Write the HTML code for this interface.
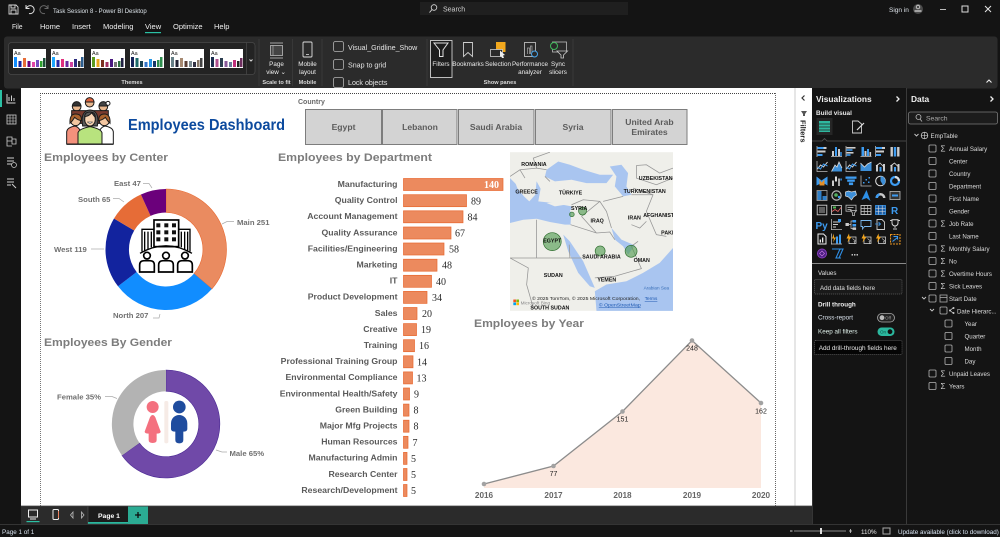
<!DOCTYPE html>
<html><head><meta charset="utf-8"><title>Power BI Desktop</title>
<style>
html,body{margin:0;padding:0;background:#141414;width:1000px;height:537px;overflow:hidden}
svg{display:block}
text{font-family:"Liberation Sans",sans-serif}
.m{fill:#f0f0f0;font-size:7.5px}
.r{fill:#ececec;font-size:6.3px;text-anchor:middle}
.g{fill:#d8d8d8;font-size:5.6px;font-weight:bold;text-anchor:middle}
.d{fill:#dcdcdc;font-size:6.15px}
.k{fill:#e4e4e4;font-size:7.1px}
.cb{fill:none;stroke:#b5b5b5;stroke-width:.8}
.t{fill:#7c7c7c;font-size:11px;font-weight:bold}
.l{fill:#5a5a5a;font-size:8.7px;font-weight:bold;text-anchor:end}
.n{fill:#2a2a2a;font-size:10px;font-family:"Liberation Serif",serif;-webkit-text-stroke:.2px #2a2a2a}
.c{fill:#707070;font-size:7.7px;font-weight:bold}
.s{fill:#5c5c5c;font-size:8.6px;font-weight:bold;text-anchor:middle}
.mt{fill:#111;font-size:16px;font-weight:bold;text-anchor:middle}
.y{fill:#666;font-size:8.2px;font-weight:bold;text-anchor:middle}
.v{fill:#222;font-size:7px;text-anchor:middle}
.bar{fill:#ec8a5e;stroke:#e8672e;stroke-width:.7}
</style></head><body>
<svg width="1000" height="537" viewBox="0 0 1000 537" xmlns="http://www.w3.org/2000/svg">
<defs>
<g id="hb"><path d="M.5 0V11" stroke="#bbb" stroke-width=".8"/><rect x="1" y="1" width="6" height="2" fill="#3d9bf0"/><rect x="7" y="1" width="3" height="2" fill="#ccc"/><rect x="1" y="4.5" width="8" height="2" fill="#ccc"/><rect x="1" y="8" width="5" height="2" fill="#3d9bf0"/></g>
<g id="vb"><path d="M0 10.5H11" stroke="#bbb" stroke-width=".8"/><rect x="1" y="5" width="2" height="5" fill="#ccc"/><rect x="4" y="1" width="2" height="9" fill="#3d9bf0"/><rect x="7" y="3" width="2" height="7" fill="#ccc"/><rect x="9.3" y="6" width="1.4" height="4" fill="#3d9bf0"/></g>
<g id="hc"><path d="M.5 0V11" stroke="#bbb" stroke-width=".8"/><rect x="1" y="1" width="9" height="1.6" fill="#ccc"/><rect x="1" y="3.2" width="6" height="1.6" fill="#3d9bf0"/><rect x="1" y="6" width="7" height="1.6" fill="#ccc"/><rect x="1" y="8.2" width="4" height="1.6" fill="#3d9bf0"/></g>
<g id="vc"><path d="M0 10.5H11" stroke="#bbb" stroke-width=".8"/><rect x="1" y="1" width="2.5" height="9" fill="#3d9bf0"/><rect x="4" y="5" width="2" height="5" fill="#ccc"/><rect x="6.5" y="3" width="2" height="7" fill="#3d9bf0"/><rect x="9" y="6" width="1.6" height="4" fill="#ccc"/></g>
<g id="pc"><rect x="1" y="1" width="2.4" height="9.5" fill="#ccc"/><rect x="4.3" y="1" width="2.4" height="9.5" fill="#3d9bf0"/><rect x="7.6" y="1" width="2.4" height="9.5" fill="#ccc"/></g>
<g id="ln"><path d="M.5 0V10.5H11" stroke="#bbb" fill="none" stroke-width=".8"/><path d="M1 8L4 4L7 6L11 1" stroke="#ddd" fill="none"/><path d="M1 6L4 8L7 3L11 5" stroke="#3d9bf0" fill="none"/></g>
<g id="ar"><path d="M.5 10.5L4 4L6 6L8 1L11 7V10.5Z" fill="#3d8fd8"/><path d="M.5 10.5L4 4L6 6L8 1L11 7" fill="none" stroke="#ddd" stroke-width=".8"/></g>
<g id="ar2"><path d="M0 2L4 6L7 3L11 1V10H0Z" fill="#3d8fd8"/><path d="M0 2L4 6L7 3L11 1" fill="none" stroke="#ddd" stroke-width=".8"/></g>
<g id="cl"><rect x="1" y="4" width="2" height="6.5" fill="#ccc"/><rect x="4.5" y="6" width="2" height="4.5" fill="#3d9bf0"/><rect x="8" y="3" width="2" height="7.5" fill="#ccc"/><path d="M1 5L5 2L9 6" fill="none" stroke="#e0e0e0" stroke-width=".8"/></g>
<g id="rb"><path d="M0 1L5 5L11 1V10L6 7L0 10Z" fill="#3d9bf0"/><path d="M3 4L5 7L8 4V10H3Z" fill="#e2902c"/></g>
<g id="wf"><rect x="1" y="5" width="2" height="5.5" fill="#ccc"/><rect x="4" y="1" width="2" height="5" fill="#ddd"/><rect x="7" y="3" width="2" height="7.5" fill="#aaa"/><rect x="9.4" y="3" width="1.4" height="2" fill="#3d9bf0"/></g>
<g id="fn"><rect x="0" y="1" width="11" height="2.3" fill="#3d9bf0"/><rect x="1.7" y="4" width="7.6" height="2.3" fill="#3d9bf0"/><rect x="3.4" y="7" width="4.2" height="2.6" fill="#3d9bf0"/></g>
<g id="sc"><path d="M.5 0V10.5H11" stroke="#bbb" fill="none" stroke-width=".8"/><g fill="#3d9bf0"><rect x="2.5" y="6.5" width="1.5" height="1.5"/><rect x="5" y="3.5" width="1.5" height="1.5"/><rect x="7.5" y="6" width="1.5" height="1.5"/><rect x="8" y="1.5" width="1.5" height="1.5"/></g></g>
<g id="pi"><circle cx="5.5" cy="5.5" r="4.8" fill="none" stroke="#ddd"/><path d="M5.5 5.5V.7A4.8 4.8 0 0 1 8 9.6Z" fill="#3d8fd8"/></g>
<g id="do"><circle cx="5.5" cy="5.5" r="4" fill="none" stroke="#3d9bf0" stroke-width="2.2"/><path d="M5.5 1.5A4 4 0 0 1 9.5 5.5" stroke="#ddd" stroke-width="2.2" fill="none"/></g>
<g id="tr"><rect x=".5" y=".5" width="10" height="10" fill="none" stroke="#aaa" stroke-width=".8"/><rect x="1" y="1" width="4" height="9" fill="#2f7fc8"/><rect x="6" y="6" width="4" height="4" fill="#2f7fc8"/></g>
<g id="gl"><circle cx="5.5" cy="5.5" r="4.6" fill="none" stroke="#bbb" stroke-width="1.2"/><circle cx="5" cy="5" r="1.8" fill="#55b060"/><circle cx="8" cy="7" r="1.2" fill="#3d9bf0"/></g>
<g id="mp"><path d="M0 2L3 1L6 2L10 1L11 5L8 7L6 10L3 7L0 6Z" fill="#3d8fd8" stroke="#ddd" stroke-width=".7"/></g>
<g id="az"><path d="M6 0L10 11L6 8L1 10Z" fill="#2c8fe6"/></g>
<g id="ga"><path d="M.5 8A5 5 0 0 1 10.5 8H8A2.5 2.5 0 0 0 3 8Z" fill="#c8c8c8"/><path d="M.5 8A5 5 0 0 1 4 3.3L5 5.6A2.5 2.5 0 0 0 3 8Z" fill="#3d9bf0"/></g>
<g id="cd"><rect x=".5" y="1.5" width="10" height="8" fill="#333" stroke="#bbb" stroke-width=".8"/><rect x="2.5" y="4.5" width="6" height="2" fill="#3d9bf0"/></g>
<g id="ml"><rect x=".7" y=".7" width="9.6" height="9.6" fill="none" stroke="#ccc" stroke-width=".9"/><path d="M2.5 3.5H8.5M2.5 5.5H8.5M2.5 7.5H8.5" stroke="#ddd" stroke-width=".8"/></g>
<g id="kp"><rect x=".5" y="1" width="10" height="9" fill="none" stroke="#ccc" stroke-width=".8"/><path d="M1 7L4 5L7 7L10 3" stroke="#e66" fill="none" stroke-width=".8"/><rect x="2" y="2" width="3" height="2" fill="#5b5"/></g>
<g id="sl"><rect x=".5" y=".7" width="10" height="6" fill="none" stroke="#bbb" stroke-width=".8"/><path d="M2 3H8M2 5H6" stroke="#ccc" stroke-width=".7"/><path d="M5 6H11L9 8.5V11H7V8.5Z" fill="#222" stroke="#ccc" stroke-width=".7"/></g>
<g id="tb"><rect x=".5" y="1" width="10" height="9" fill="none" stroke="#ccc" stroke-width=".9"/><path d="M.5 4H10.5M.5 7H10.5M3.7 1V10M7.2 1V10" stroke="#ccc" stroke-width=".7"/></g>
<g id="mx"><rect x=".5" y="1" width="10" height="9" fill="#1c5fa8" stroke="#3d9bf0" stroke-width=".8"/><path d="M.5 4H10.5M.5 7H10.5M3.7 1V10M7.2 1V10" stroke="#ddd" stroke-width=".6"/></g>
<g id="ki"><path d="M0 10.5H11M.5 0V11" stroke="#bbb" stroke-width=".8"/><path d="M2 3H9M2 5.5H7M2 8H5" stroke="#ccc" stroke-width="1.1"/><rect x="7" y="0" width="3" height="3" fill="#3d9bf0"/></g>
<g id="dt"><rect x="0" y="4" width="3.4" height="3" fill="#ccc"/><rect x="7" y="1" width="3.6" height="2.5" fill="#3d9bf0"/><rect x="7" y="5" width="3.6" height="2.5" fill="#3d9bf0"/><rect x="7" y="8.4" width="3.6" height="2.5" fill="#ccc"/><path d="M3.4 5.5H5.5V2H7M5.5 5.5V9.5H7" stroke="#ccc" fill="none" stroke-width=".7"/></g>
<g id="cm"><path d="M.5 1.5H10.5V7.5H4L2 10V7.5H.5Z" fill="none" stroke="#7ab8ee" stroke-width=".9"/></g>
<g id="pg"><path d="M2 .5H7L9.5 3V10.5H2Z" fill="none" stroke="#ccc" stroke-width=".9"/><path d="M0 5H5.5M3.5 3L5.5 5L3.5 7" fill="none" stroke="#3d9bf0" stroke-width=".8"/></g>
<g id="ty"><path d="M2.5 .7H8.5V4A3 3 0 0 1 2.5 4Z" fill="none" stroke="#ddd" stroke-width="1"/><path d="M.5 1.5H2.5V4M10.5 1.5H8.5V4M5.5 7V9M3.5 10H7.5" fill="none" stroke="#ccc" stroke-width=".9"/></g>
<g id="pr"><path d="M1.5 .5H7L9.5 3V10.5H1.5Z" fill="none" stroke="#eee" stroke-width="1"/><rect x="3.2" y="6" width="1.3" height="3" fill="#eee"/><rect x="5.5" y="4" width="1.3" height="5" fill="#eee"/></g>
<g id="o1"><path d="M0 10.5H11M.5 0V11" stroke="#ccc" stroke-width=".7"/><rect x="5" y="3" width="2" height="7" fill="#3d9bf0"/><rect x="8" y="1" width="2" height="9" fill="#3d9bf0"/><path d="M3 0L1 5H3L2 9L5 4H3Z" fill="#f2a51e"/></g>
<g id="o2"><rect x="3.5" y="3.5" width="7" height="6.5" fill="none" stroke="#ccc" stroke-width=".8"/><path d="M7 5L10 7.5L8.5 8L9.5 10.5" fill="none" stroke="#ccc" stroke-width=".6"/><path d="M3.5 0L1 5H3L2 9L6 3.5H4Z" fill="#f2a51e"/></g>
<g id="o3"><rect x="1" y="1" width="9.5" height="9.5" fill="#1d1d1d" stroke="#e8931f" stroke-width="1" stroke-dasharray="2 1"/><path d="M4 3H8V6M3 8L8 4" stroke="#3d9bf0" fill="none"/></g>
<g id="ck"><rect width="7" height="7" rx="1" class="cb"/></g>
</defs>

<rect width="1000" height="537" fill="#141414"/>

<!-- top bar -->
<path d="M9 5H16L18 7V14H9Z M11 5V8H15V5 M11 14V10H16V14" fill="none" stroke="#d8d8d8" stroke-width=".9"/>
<path d="M26 5V8.5H29.5M26.5 8A4 4 0 1 1 29 13.5" fill="none" stroke="#e0e0e0" stroke-width="1"/>
<path d="M48 5V8.5H44.5M47.5 8A4 4 0 1 0 45 13.5" fill="none" stroke="#666" stroke-width="1"/>
<text x="53" y="13" fill="#dde4ea" font-size="6">Task Session 8 - Power BI Desktop</text>
<rect x="420" y="2" width="208" height="13" fill="#1f1f1f"/>
<circle cx="434" cy="7.5" r="2.8" fill="none" stroke="#ddd" stroke-width=".8"/><path d="M432 9.5L429.500 12.500" stroke="#ddd" stroke-width=".9"/>
<text x="443" y="11.500" fill="#cfcfcf" font-size="7">Search</text>
<text x="889" y="12" fill="#dde3ea" font-size="6.500">Sign in</text>
<circle cx="918" cy="9" r="5" fill="#4a4a4a"/><circle cx="918" cy="7" r="1.800" fill="none" stroke="#ddd" stroke-width=".8"/><path d="M914.500 11H921.500" stroke="#ddd" stroke-width="1.200"/>
<path d="M940 9.500H946" stroke="#bbb" stroke-width="1"/>
<rect x="962" y="6" width="6" height="6" fill="none" stroke="#ddd" stroke-width="1"/>
<path d="M985 6L991 12M991 6L985 12" stroke="#e5e5e5" stroke-width="1"/>

<text x="12" y="29" class="m" textLength="10.500" lengthAdjust="spacingAndGlyphs">File</text>
<text x="40" y="29" class="m">Home</text>
<text x="72" y="29" class="m">Insert</text>
<text x="103" y="29" class="m">Modeling</text>
<text x="145" y="29" class="m">View</text>
<rect x="145" y="32" width="16" height="1.200" fill="#2bc0a4"/>
<text x="173" y="29" class="m">Optimize</text>
<text x="214" y="29" class="m">Help</text>

<!-- ribbon -->
<rect x="4" y="36.500" width="993.500" height="52" rx="3" fill="#2b2b2b"/>
<rect x="8.500" y="42.500" width="246.500" height="32" rx="3" fill="#232323" stroke="#4a4a4a" stroke-width=".7"/>
<g id="themes">
<g transform="translate(13,49)"><rect width="33" height="19" fill="#fff"/><text x="1" y="6" font-size="5.400" fill="#222">Aa</text><rect x="1" y="8" width="3" height="10" fill="#118dff"/><rect x="5.500" y="12" width="3" height="6" fill="#12239e"/><rect x="10" y="9" width="3" height="9" fill="#e66c37"/><rect x="14.500" y="12" width="3" height="6" fill="#6b007b"/><rect x="19" y="13" width="3" height="5" fill="#e044a7"/><rect x="23" y="11" width="3" height="7" fill="#744ec2"/><rect x="27" y="12" width="2.500" height="6" fill="#2da12d"/><rect x="30" y="9" width="2.500" height="9" fill="#1c4e3a"/></g>
<g transform="translate(51,49)"><rect width="33" height="19" fill="#fff"/><text x="1" y="6" font-size="5.400" fill="#222">Aa</text><rect x="1" y="8" width="3" height="10" fill="#1ea7ff"/><rect x="5.500" y="11" width="3" height="7" fill="#2a2aa5"/><rect x="10" y="10" width="3" height="8" fill="#e0307f"/><rect x="14.500" y="12" width="3" height="6" fill="#6b2aa0"/><rect x="19" y="13" width="3" height="5" fill="#d044a0"/><rect x="23" y="10" width="3" height="8" fill="#2d2d80"/><rect x="27" y="12" width="2.500" height="6" fill="#333"/><rect x="30" y="8" width="2.500" height="10" fill="#2d5f90"/></g>
<g transform="translate(91,49)"><rect width="34" height="19" fill="#fff"/><text x="1" y="6" font-size="5.400" fill="#222">Aa</text><rect x="1" y="8" width="3" height="10" fill="#5a9a1f"/><rect x="5.500" y="10" width="3" height="8" fill="#e8a61c"/><rect x="10" y="11" width="3" height="7" fill="#7a3020"/><rect x="14.500" y="13" width="3" height="5" fill="#a03060"/><rect x="19" y="10" width="3" height="8" fill="#4a1a80"/><rect x="23" y="13" width="3" height="5" fill="#777"/><rect x="27" y="12" width="2.500" height="6" fill="#2d7040"/><rect x="30" y="9" width="2.500" height="9" fill="#224"/></g>
<g transform="translate(130,49)"><rect width="34" height="19" fill="#fff"/><text x="1" y="6" font-size="5.400" fill="#222">Aa</text><rect x="1" y="8" width="3" height="10" fill="#15235a"/><rect x="5.500" y="9" width="3" height="9" fill="#1d6a6a"/><rect x="10" y="12" width="3" height="6" fill="#154050"/><rect x="14.500" y="13" width="3" height="5" fill="#3377cc"/><rect x="19" y="10" width="3" height="8" fill="#2596e6"/><rect x="23" y="12" width="3" height="6" fill="#163868"/><rect x="27" y="11" width="2.500" height="7" fill="#2f8f4f"/><rect x="30" y="8" width="2.500" height="10" fill="#2f8f4f"/></g>
<g transform="translate(170,49)"><rect width="34" height="19" fill="#fff"/><text x="1" y="6" font-size="5.400" fill="#222">Aa</text><rect x="1" y="8" width="3" height="10" fill="#667f86"/><rect x="5.500" y="11" width="3" height="7" fill="#223"/><rect x="10" y="9" width="3" height="9" fill="#a78a72"/><rect x="14.500" y="12" width="3" height="6" fill="#5d4037"/><rect x="19" y="12" width="3" height="6" fill="#7a8a90"/><rect x="23" y="13" width="3" height="5" fill="#334"/><rect x="27" y="11" width="2.500" height="7" fill="#8a7a6a"/><rect x="30" y="9" width="2.500" height="9" fill="#444"/></g>
<g transform="translate(210,49)"><rect width="33" height="19" fill="#fff"/><text x="1" y="6" font-size="5.400" fill="#222">Aa</text><rect x="1" y="8" width="3" height="10" fill="#1a2c4e"/><rect x="5.500" y="10" width="3" height="8" fill="#b0508f"/><rect x="10" y="9" width="3" height="9" fill="#2c3e50"/><rect x="14.500" y="12" width="3" height="6" fill="#8a5a9a"/><rect x="19" y="13" width="3" height="5" fill="#6a7a9a"/><rect x="23" y="11" width="3" height="7" fill="#c0307a"/><rect x="27" y="12" width="2.500" height="6" fill="#222"/><rect x="30" y="9" width="2.500" height="9" fill="#703060"/></g>
</g>
<path d="M246.500 42.500V74.500" stroke="#4a4a4a" stroke-width=".7"/>
<path d="M249.500 59.500L251 61L252.500 59.500" stroke="#ddd" fill="none"/>
<text x="132" y="84" class="g">Themes</text>
<path d="M259 39V86M292.500 39V86M322 39V86M427 39V86M573 39V86" stroke="#3d3d3d" stroke-width=".8"/>
<path d="M270 43H283M270 58H283" stroke="#ccc" stroke-width=".8"/><rect x="270.500" y="45.500" width="12" height="10" fill="#444" stroke="#bbb" stroke-width=".8"/><path d="M273 45.500V55.500" stroke="#bbb" stroke-width=".6"/>
<text x="276.500" y="66" class="r">Page</text><text x="276" y="74" class="r">view ⌄</text><text x="276.500" y="84" class="g">Scale to fit</text>
<rect x="303" y="42" width="9" height="15" rx="1" fill="none" stroke="#ddd" stroke-width=".9"/><path d="M306 54.500H309" stroke="#ddd" stroke-width=".8"/>
<text x="307.500" y="66" class="r">Mobile</text><text x="307.500" y="74" class="r">layout</text><text x="307.500" y="84" class="g">Mobile</text>
<rect x="333.500" y="41.500" width="10" height="10" rx="2" class="cb"/><text x="348" y="50" class="k">Visual_Gridline_Show</text>
<rect x="333.500" y="59.500" width="10" height="10" rx="2" class="cb"/><text x="348" y="67.500" class="k">Snap to grid</text>
<rect x="333.500" y="77.500" width="10" height="10" rx="2" class="cb"/><text x="348" y="85" class="k">Lock objects</text>
<rect x="430.500" y="40.500" width="21.500" height="37" fill="#1d1d1d" stroke="#cfcfcf" stroke-width=".9"/>
<path d="M434 43H448L443 50V56.500H439.500V50Z" fill="none" stroke="#e0e0e0"/>
<text x="441" y="66" class="r">Filters</text>
<path d="M463.500 42.500H472.500V56.500L468 52.500L463.500 56.500Z" fill="none" stroke="#cfcfcf" stroke-width=".9"/>
<text x="468" y="66" class="r">Bookmarks</text>
<rect x="496" y="42" width="9.500" height="10" fill="#f2a81d"/><rect x="490.500" y="49.500" width="12" height="7" fill="#2a2a2a" stroke="#ccc" stroke-width=".8"/><path d="M500 50.500L505 55L503 55.500L504 58L502 58L501 56L500 57Z" fill="#eee"/>
<text x="498" y="66" class="r">Selection</text>
<rect x="524.500" y="42.500" width="11" height="14" fill="none" stroke="#ccc" stroke-width=".8"/><path d="M527.500 54V48H529.500V54M530.500 54V46H532V52" fill="none" stroke="#aaa" stroke-width=".7"/><circle cx="534.500" cy="54" r="3" fill="#2a2a2a" stroke="#4aa8ee"/>
<text x="530" y="66" class="r">Performance</text><text x="530" y="74" class="r">analyzer</text>
<rect x="552.500" y="42" width="14" height="10" fill="none" stroke="#bbb" stroke-width=".8"/><circle cx="554" cy="46" r="3.500" fill="#2a2a2a" stroke="#3fb85a"/><path d="M557 51H567.500L563.500 55V58H561V55Z" fill="#2a2a2a" stroke="#ccc" stroke-width=".8"/>
<text x="558" y="66" class="r">Sync</text><text x="558" y="74" class="r">slicers</text>
<text x="500" y="84" class="g">Show panes</text>
<path d="M986.500 82.500L989 80L991.500 82.500" stroke="#eee" fill="none" stroke-width="1.100"/>

<!-- left rail -->
<rect x="0" y="90" width="2" height="17" fill="#2bc0a4"/>
<path d="M7 94V103H15.500M9 101V97M11.500 101V95.500M14 101V98" stroke="#cfcfcf" fill="none"/>
<rect x="7" y="115" width="9" height="9" fill="none" stroke="#cfcfcf" stroke-width=".8"/><path d="M7 118H16M7 121H16M10 115V124M13 115V124" stroke="#cfcfcf" stroke-width=".6"/>
<path d="M7 137H12V141H7ZM12 139H16V144H12ZM7 141V146H12" fill="none" stroke="#cfcfcf" stroke-width=".8"/>
<path d="M7 158H14M7 161H14M7 164H14" stroke="#cfcfcf" stroke-width=".9"/><circle cx="14" cy="165" r="2.500" fill="#141414" stroke="#cfcfcf" stroke-width=".7"/>
<path d="M7 179H14M7 182H14M7 185H11" stroke="#cfcfcf" stroke-width=".9"/><path d="M12 184L16 188" stroke="#cfcfcf"/>

<!-- canvas -->
<rect x="21" y="88" width="791" height="418" fill="#fff"/>
<path d="M40.500 93V506" stroke="#555" stroke-width=".8" stroke-dasharray="1 1"/>
<path d="M40 93.500H776" stroke="#444" stroke-width=".9" stroke-dasharray="1 1"/>
<path d="M775.500 93V506" stroke="#666" stroke-width="1" stroke-dasharray="1 1"/>
<path d="M795 88V506" stroke="#c9c9c9" stroke-width=".9"/>
<path d="M804.500 95.500L802 98L804.500 100.500" fill="none" stroke="#333" stroke-width="1.200"/>
<path d="M801 111H807L805 114V116H803V114Z" fill="#555"/>
<text transform="translate(800.500,120) rotate(90)" fill="#222" font-size="7.500" font-weight="bold">Filters</text>

<!-- people icon -->
<g transform="translate(40,90) scale(.3333)">
<g stroke="#1a1a1a" stroke-width="3">
<circle cx="110" cy="50" r="13" fill="#e8b78e"/><path d="M97 48A13 13 0 0 1 123 48Z" fill="#333"/>
<circle cx="149" cy="38" r="13" fill="#e8b78e"/><path d="M136 36A13 13 0 0 1 162 36Z" fill="#d9613c"/>
<circle cx="190" cy="50" r="13" fill="#e8b78e"/><path d="M177 48A13 13 0 0 1 203 48Z" fill="#444"/><circle cx="204" cy="40" r="6" fill="#fff"/>
<path d="M95 62H205V100H95Z" fill="#7a3b2e"/>
<path d="M80 162V125Q82 112 105 108Q127 114 130 162Z" fill="#f3917c"/>
<path d="M170 162Q172 114 195 108Q218 112 220 125V162Z" fill="#fff"/>
<circle cx="107" cy="92" r="15" fill="#f4c7a1"/><path d="M90 100Q88 72 107 72Q126 72 124 92Q112 90 104 82Q98 92 90 100Z" fill="#a9622e"/>
<circle cx="193" cy="92" r="15" fill="#f4c7a1"/><path d="M176 92Q176 72 193 72Q212 72 210 100Q202 92 196 82Q188 90 176 92Z" fill="#a9622e"/>
<path d="M114 162V128Q118 116 150 110Q182 116 186 128V162Z" fill="#b8e37e"/>
<path d="M128 108Q120 62 150 60Q180 62 172 108Z" fill="#5a5a5a"/>
<ellipse cx="150" cy="88" rx="16" ry="20" fill="#f8d5b4"/>
<path d="M134 80Q148 78 155 68Q162 78 166 82Q166 66 150 66Q134 66 134 80Z" fill="#5a5a5a"/>
<path d="M80 163H220" stroke-width="3.500"/>
</g><path d="M142 96Q150 104 158 96Z" fill="#fff" stroke="#1a1a1a" stroke-width="1.500"/>
</g>
<text x="128" y="130" fill="#0c4a9e" font-size="15.500" font-weight="bold" textLength="157" lengthAdjust="spacingAndGlyphs">Employees Dashboard</text>

<!-- slicer -->
<text x="298" y="104" fill="#6a6a6a" font-size="7" font-weight="bold">Country</text>
<g fill="#d3d3d3" stroke="#7d7d7d" stroke-width="1">
<rect x="305.500" y="109.500" width="76" height="35"/><rect x="382.500" y="109.500" width="74.500" height="35"/><rect x="458.500" y="109.500" width="75.500" height="35"/><rect x="535.500" y="109.500" width="75.500" height="35"/><rect x="612.500" y="109.500" width="74.500" height="35"/>
</g>
<text x="343.500" y="130" class="s">Egypt</text><text x="420" y="130" class="s">Lebanon</text><text x="496" y="130" class="s">Saudi Arabia</text><text x="573" y="130" class="s">Syria</text>
<text x="649.500" y="125" class="s">United Arab</text><text x="649.500" y="135" class="s">Emirates</text>

<!-- chart titles -->
<text x="44" y="161" class="t" textLength="124" lengthAdjust="spacingAndGlyphs">Employees by Center</text>
<text x="278" y="161" class="t" textLength="154" lengthAdjust="spacingAndGlyphs">Employees by Department</text>
<text x="44" y="346" class="t" textLength="128" lengthAdjust="spacingAndGlyphs">Employees By Gender</text>
<text x="474" y="327" class="t" textLength="110" lengthAdjust="spacingAndGlyphs">Employees by Year</text>

<!-- donut center -->
<g transform="translate(166,249.500)">
<path d="M0 -60.500A60.500 60.500 0 0 1 45.900 39.400L28 24.100A37 37 0 0 0 0 -37Z" fill="#ea8b60" stroke="#e8682f" stroke-width=".6"/>
<path d="M45.900 39.400A60.500 60.500 0 0 1 -48 36.800L-29.400 22.500A37 37 0 0 0 28 24.100Z" fill="#118dff"/>
<path d="M-48 36.800A60.500 60.500 0 0 1 -52 -31L-31.800 -19A37 37 0 0 0 -29.400 22.500Z" fill="#12239e"/>
<path d="M-52 -31A60.500 60.500 0 0 1 -25.100 -55L-15.400 -33.600A37 37 0 0 0 -31.800 -19Z" fill="#e66c37"/>
<path d="M-25.100 -55A60.500 60.500 0 0 1 0 -60.500L0 -37A37 37 0 0 0 -15.400 -33.600Z" fill="#6b007b"/>
</g>
<g stroke="#aaa" stroke-width=".7" fill="none"><path d="M222 224L227 221.500H234"/><path d="M113 198.500L119 198.500L124 202"/><path d="M143 183.500H149L152 188"/><path d="M91 249H104" stroke="#ccc" stroke-width="1.200"/><path d="M153 318H159L160 314"/></g>
<text x="237" y="225" class="c">Main 251</text>
<text x="113" y="318" class="c">North 207</text>
<text x="54" y="252" class="c">West 119</text>
<text x="78" y="202" class="c">South 65</text>
<text x="114" y="186" class="c">East 47</text>
<g transform="translate(40,90) scale(.3333)" stroke="#000" fill="none">
<rect x="342" y="390" width="74" height="80" stroke-width="5" fill="#fff"/>
<g fill="#111" stroke="none"><rect x="349" y="400" width="12" height="12"/><rect x="373" y="400" width="12" height="12"/><rect x="396" y="400" width="12" height="12"/><rect x="349" y="421" width="12" height="12"/><rect x="373" y="421" width="12" height="12"/><rect x="396" y="421" width="12" height="12"/><rect x="349" y="442" width="12" height="12"/><rect x="373" y="442" width="12" height="12"/><rect x="396" y="442" width="12" height="12"/></g>
<path d="M342 418H306V485M416 418H450V485M314 425V482M324 425V478M334 425V472M424 425V472M434 425V478M443 425V482" stroke-width="4"/>
<path d="M300 490Q378 445 456 490" stroke-width="4"/>
<g stroke-width="5" fill="#fff"><circle cx="321" cy="497" r="10"/><circle cx="378" cy="497" r="10"/><circle cx="435" cy="497" r="10"/><path d="M299 546V525Q299 512 312 512H330Q343 512 343 525V546Z"/><path d="M356 546V525Q356 512 369 512H387Q400 512 400 525V546Z"/><path d="M413 546V525Q413 512 426 512H444Q457 512 457 525V546Z"/></g>
</g>

<!-- donut gender -->
<g transform="translate(166,424)">
<path d="M0 -54A54 54 0 1 1 -44 31.500L-26.500 19A32.700 32.700 0 1 0 0 -32.700Z" fill="#7049a8" stroke="#4b2a94" stroke-width=".6"/>
<path d="M-44 31.500A54 54 0 0 1 0 -54L0 -32.700A32.700 32.700 0 0 0 -26.500 19Z" fill="#b3b3b3"/>
</g>
<g stroke="#aaa" stroke-width=".7" fill="none"><path d="M105 396.500H112L117 398.500"/><path d="M216 450L222 452H227"/></g>
<text x="57" y="399.500" class="c">Female 35%</text>
<text x="229.500" y="456" class="c">Male 65%</text>
<g transform="translate(40,325) scale(.3333)">
<circle cx="338" cy="246" r="18" fill="#f4707f"/>
<path d="M338 270Q344 270 348 282L362 320Q362 326 350 326V345Q350 354 338 354Q326 354 326 345V326Q314 326 314 320L328 282Q332 270 338 270Z" fill="#f4707f"/>
<rect x="373" y="228" width="12" height="127" rx="5" fill="#f6ebe6"/>
<circle cx="418" cy="246" r="19" fill="#1f4c9e"/>
<path d="M393 295A24.500 25 0 0 1 442 295V312Q442 320 430 320V345Q430 355 418 355Q406 355 406 345V320Q393 320 393 312Z" fill="#1f4c9e"/>
</g>

<!-- bars -->
<rect x="403.500" y="178.500" width="99.500" height="12" class="bar"/>
<rect x="403.500" y="194.700" width="63" height="12" class="bar"/>
<rect x="403.500" y="210.800" width="59.500" height="12" class="bar"/>
<rect x="403.500" y="227" width="47.500" height="12" class="bar"/>
<rect x="403.500" y="243" width="40.500" height="12" class="bar"/>
<rect x="403.500" y="259.200" width="33.500" height="12" class="bar"/>
<rect x="403.500" y="275.300" width="28" height="12" class="bar"/>
<rect x="403.500" y="291.400" width="23.500" height="12" class="bar"/>
<rect x="403.500" y="307.500" width="13.500" height="12" class="bar"/>
<rect x="403.500" y="323.600" width="13" height="12" class="bar"/>
<rect x="403.500" y="339.700" width="11" height="12" class="bar"/>
<rect x="403.500" y="355.800" width="9.500" height="12" class="bar"/>
<rect x="403.500" y="371.900" width="9" height="12" class="bar"/>
<rect x="403.500" y="388" width="6" height="12" class="bar"/>
<rect x="403.500" y="404.100" width="5.500" height="12" class="bar"/>
<rect x="403.500" y="420.200" width="5.500" height="12" class="bar"/>
<rect x="403.500" y="436.300" width="4.500" height="12" class="bar"/>
<rect x="403.500" y="452.400" width="3.500" height="12" class="bar"/>
<rect x="403.500" y="468.500" width="3.500" height="12" class="bar"/>
<rect x="403.500" y="484.500" width="3.500" height="12" class="bar"/>
<text x="397.500" y="187" class="l">Manufacturing</text>
<text x="397.500" y="203.100" class="l">Quality Control</text>
<text x="397.500" y="219.200" class="l">Account Management</text>
<text x="397.500" y="235.300" class="l">Quality Assurance</text>
<text x="397.500" y="251.400" class="l">Facilities/Engineering</text>
<text x="397.500" y="267.500" class="l">Marketing</text>
<text x="397.500" y="283.600" class="l">IT</text>
<text x="397.500" y="299.700" class="l">Product Development</text>
<text x="397.500" y="315.800" class="l">Sales</text>
<text x="397.500" y="331.900" class="l">Creative</text>
<text x="397.500" y="348" class="l">Training</text>
<text x="397.500" y="364.100" class="l">Professional Training Group</text>
<text x="397.500" y="380.200" class="l">Environmental Compliance</text>
<text x="397.500" y="396.300" class="l">Environmental Health/Safety</text>
<text x="397.500" y="412.400" class="l">Green Building</text>
<text x="397.500" y="428.500" class="l">Major Mfg Projects</text>
<text x="397.500" y="444.600" class="l">Human Resources</text>
<text x="397.500" y="460.700" class="l">Manufacturing Admin</text>
<text x="397.500" y="476.800" class="l">Research Center</text>
<text x="397.500" y="492.900" class="l">Research/Development</text>
<text x="484" y="188" fill="#fff" font-size="10" font-weight="bold" style="font-family:'Liberation Serif',serif">140</text>
<text x="471" y="204.300" class="n">89</text><text x="467.500" y="220.400" class="n">84</text><text x="455" y="236.500" class="n">67</text><text x="449" y="252.600" class="n">58</text><text x="442" y="268.700" class="n">48</text><text x="436" y="284.800" class="n">40</text><text x="432" y="300.900" class="n">34</text><text x="422" y="317" class="n">20</text><text x="421" y="333.100" class="n">19</text><text x="419" y="349.200" class="n">16</text><text x="417" y="365.300" class="n">14</text><text x="416.500" y="381.400" class="n">13</text><text x="414" y="397.500" class="n">9</text><text x="413.500" y="413.600" class="n">8</text><text x="413.500" y="429.700" class="n">8</text><text x="412.500" y="445.800" class="n">7</text><text x="411" y="461.900" class="n">5</text><text x="411" y="478" class="n">5</text><text x="411" y="494.100" class="n">5</text>

<!-- map -->
<svg x="510" y="152" width="163" height="159" viewBox="30 22 490 477">
<rect x="30" y="22" width="490" height="477" fill="#efefea"/>
<g fill="#a9c5f0">
<path d="M140 75L175 50L210 60L250 75L300 90L340 90L320 115L260 115L215 105L165 110L135 95Z"/>
<path d="M330 65L365 60L385 85L380 125L395 150L370 155L345 125L350 95Z"/>
<path d="M30 100L60 130L95 125L110 110L122 132L115 170L160 175L215 185L212 240L195 240L150 232L110 222L70 225L30 235Z"/>
<path d="M190 270L210 290L250 350L285 430L270 425L235 385L205 320Z"/>
<path d="M335 250L365 285L400 300L405 302L385 330L370 305L345 285Z"/>
<path d="M520 310L480 355L430 385L380 410L320 420L285 440L290 499L520 499Z"/>
</g>
<g fill="#efefea"><path d="M40 98L110 108L106 150L88 170L72 155L52 130Z"/><path d="M140 175L180 172L195 180L165 185Z"/><path d="M210 196L222 192L224 200L212 202Z"/></g>
<g fill="none" stroke="#969696" stroke-width="2.300">
<path d="M30 95L60 75L110 70L140 75M110 70L100 40L150 22M60 75L75 100M135 95L150 110"/>
<path d="M215 180L250 165L300 170L320 200L335 250"/>
<path d="M245 215L300 170M212 240L290 265L330 262L345 285M245 215L290 265"/>
<path d="M110 225V340H210L208 300M30 340H110M30 340L85 370L80 420L100 490M210 340H245"/>
<path d="M285 400L345 395L425 372L395 305"/>
<path d="M310 170L370 155M400 130L460 150L440 200L470 270L500 275M410 62V100L470 120L520 100M395 150L460 150M410 62L440 60L480 85L520 70"/>
<path d="M395 240L420 250L440 230M395 305L415 290"/>
</g>
<g>
<text x="102" y="63" class="mt">ROMANIA</text><text x="80" y="147" class="mt">GREECE</text><text x="212" y="149" class="mt">TÜRKIYE</text><text x="468" y="106" class="mt">UZBEKISTAN</text><text x="435" y="145" class="mt">TURKMENISTAN</text><text x="404" y="225" class="mt">IRAN</text><text x="477" y="217" class="mt">AFGHANIST</text><text x="503" y="269" class="mt">PAKI</text><text x="292" y="233" class="mt">IRAQ</text><text x="160" y="397" class="mt">SUDAN</text><text x="321" y="411" class="mt">YEMEN</text><text x="150" y="495" class="mt">SOUTH SUDAN</text>
</g>
<g fill="#4d9a4d" fill-opacity=".62" stroke="#2d6d2d" stroke-width="2">
<circle cx="157" cy="291" r="27"/><circle cx="216" cy="209" r="7"/><circle cx="248" cy="199" r="12"/><circle cx="301" cy="319" r="15"/><circle cx="394" cy="320" r="18"/>
</g>
<text x="157" y="293" class="mt">EGYPT</text><text x="238" y="196" class="mt">SYRIA</text><text x="305" y="342" class="mt">SAUDI ARABIA</text><text x="426" y="352" class="mt">OMAN</text>
<text x="470" y="435" fill="#3a70b8" font-size="14" text-anchor="middle">Arabian Sea</text>
<rect x="40" y="465" width="8" height="8" fill="#f25022"/><rect x="49" y="465" width="8" height="8" fill="#7fba00"/><rect x="40" y="474" width="8" height="8" fill="#00a4ef"/><rect x="49" y="474" width="8" height="8" fill="#ffb900"/>
<text x="62" y="480" fill="#888" font-size="14">Microsoft Bing</text>
<text x="96" y="467" fill="#222" font-size="14" textLength="325" lengthAdjust="spacingAndGlyphs">© 2025 TomTom, © 2025 Microsoft Corporation,</text>
<text x="435" y="467" fill="#1a56b0" font-size="14" text-decoration="underline">Terms</text>
<text x="297" y="486" fill="#1a56b0" font-size="14" text-decoration="underline" textLength="126" lengthAdjust="spacingAndGlyphs">© OpenStreetMap</text>
</svg>

<!-- line chart -->
<path d="M484 484L553.500 466L622.500 411.500L692 340.500L761 403V488H484Z" fill="#fbe8df"/>
<path d="M484 484L553.500 466L622.500 411.500L692 340.500L761 403" fill="none" stroke="#8c8c8c" stroke-width="1.300"/>
<g fill="#a2a2a2"><circle cx="484" cy="484" r="2.300"/><circle cx="553.500" cy="466" r="2.300"/><circle cx="622.500" cy="411.500" r="2.300"/><circle cx="692" cy="340.500" r="2.300"/><circle cx="761" cy="403" r="2.300"/></g>
<text x="553.500" y="476" class="v">77</text><text x="622.500" y="421.500" class="v">151</text><text x="692" y="350.500" class="v">248</text><text x="761" y="413.500" class="v">162</text>
<text x="484" y="498" class="y">2016</text><text x="553.500" y="498" class="y">2017</text><text x="622.500" y="498" class="y">2018</text><text x="692" y="498" class="y">2019</text><text x="761" y="498" class="y">2020</text>

<!-- viz pane -->
<rect x="812" y="88" width="94" height="437" fill="#141414"/>
<text x="816" y="102" fill="#f0f0f0" font-size="8.400" font-weight="bold">Visualizations</text>
<path d="M896.500 96.500L899 99L896.500 101.500" fill="none" stroke="#eee" stroke-width="1.300"/>
<text x="816" y="115" fill="#e8e8e8" font-size="6.400" font-weight="bold">Build visual</text>
<rect x="816.500" y="118" width="16" height="17" fill="#262626"/>
<rect x="819" y="121" width="11" height="11" fill="#2fb8a0"/><path d="M819 124H830M819 127H830M819 130H830" stroke="#222" stroke-width=".7"/>
<path d="M852.500 121H858L861.500 124V133H852.500Z" fill="none" stroke="#ccc" stroke-width=".9"/><path d="M857 130L864 123" stroke="#ddd" stroke-width="1.200"/>
<path d="M812 141H822L824.500 138.500L827 141H906" fill="none" stroke="#555" stroke-width=".8"/>
<g>
<use href="#hb" x="816.500" y="146"/><use href="#vb" x="831" y="146"/><use href="#hc" x="845.500" y="146"/><use href="#vc" x="860.500" y="146"/><use href="#hb" x="875" y="146"/><use href="#pc" x="889.500" y="146"/>
<use href="#ln" x="816.500" y="161"/><use href="#ar" x="831" y="161"/><use href="#ln" x="845.500" y="161"/><use href="#ar2" x="860.500" y="161"/><use href="#cl" x="875" y="161"/><use href="#cl" x="889.500" y="161"/>
<use href="#rb" x="816.500" y="175.500"/><use href="#wf" x="831" y="175.500"/><use href="#fn" x="845.500" y="175.500"/><use href="#sc" x="860.500" y="175.500"/><use href="#pi" x="875" y="175.500"/><use href="#do" x="889.500" y="175.500"/>
<use href="#tr" x="816.500" y="190"/><use href="#gl" x="831" y="190"/><use href="#mp" x="845.500" y="190"/><use href="#az" x="860.500" y="190"/><use href="#ga" x="875" y="190"/><use href="#cd" x="889.500" y="190"/>
<use href="#ml" x="816.500" y="204.500"/><use href="#kp" x="831" y="204.500"/><use href="#sl" x="845.500" y="204.500"/><use href="#tb" x="860.500" y="204.500"/><use href="#mx" x="875" y="204.500"/>
<text x="891" y="214" fill="#3d9bf0" font-size="10" font-weight="bold">R</text>
<text x="815.500" y="229" fill="#3d9bf0" font-size="10" font-weight="bold">Py</text>
<use href="#ki" x="831" y="219"/><use href="#dt" x="845.500" y="219"/><use href="#cm" x="860.500" y="219"/><use href="#pg" x="875" y="219"/><use href="#ty" x="889.500" y="219"/>
<use href="#pr" x="816.500" y="233.500"/><use href="#o1" x="831" y="233.500"/><use href="#o2" x="845.500" y="233.500"/><use href="#o2" x="860.500" y="233.500"/><use href="#o2" x="875" y="233.500"/><use href="#o3" x="889.500" y="233.500"/>
<circle cx="822" cy="253.500" r="4.500" fill="#4b1f82" stroke="#8a3fc0"/><path d="M819.500 253.500L822 251L824.500 253.500L822 256Z" fill="none" stroke="#c77ae0" stroke-width=".7"/>
<path d="M832 249H840L836 258H841M836 249H843L839 258" fill="none" stroke="#2f8fe6" stroke-width="1.100"/>
<text x="851" y="255.500" fill="#e8e8e8" font-size="9" font-weight="bold">...</text>
</g>
<path d="M812 263.500H906" stroke="#8a8a8a" stroke-width=".9"/>
<text x="818" y="275" fill="#e0e0e0" font-size="6.200">Values</text>
<rect x="814.500" y="279.500" width="87.500" height="14.500" rx="1" fill="#1a1a1a" stroke="#6a6a6a" stroke-width=".7" stroke-dasharray="1 1"/>
<text x="820" y="290" fill="#e0e0e0" font-size="6.200">Add data fields here</text>
<text x="818" y="306.500" fill="#eee" font-size="6.300" font-weight="bold">Drill through</text>
<text x="818" y="319.500" fill="#dbe4ee" font-size="6.300">Cross-report</text>
<rect x="877.500" y="313.500" width="17" height="8.500" rx="4.200" fill="#222" stroke="#aaa" stroke-width=".8"/><circle cx="882" cy="317.700" r="2.400" fill="#bbb"/><text x="885" y="319.700" fill="#999" font-size="4.500">Off</text>
<text x="818" y="333.500" fill="#dff0ea" font-size="6.300">Keep all filters</text>
<rect x="877.500" y="327.500" width="17" height="8.500" rx="4.200" fill="#2bb79e"/><circle cx="890" cy="331.700" r="2.400" fill="#111"/><text x="880" y="333.700" fill="#0d4d43" font-size="4.500">On</text>
<rect x="814.500" y="340.500" width="87.500" height="14" rx="1" fill="#050505" stroke="#6a6a6a" stroke-width=".7" stroke-dasharray="1 1"/>
<text x="818.700" y="350" fill="#e8e8e8" font-size="6.400">Add drill-through fields here</text>

<!-- data pane -->
<path d="M906.500 88V524" stroke="#3a3a3a" stroke-width="1"/>
<path d="M812.500 490V524" stroke="#444" stroke-width=".7"/>
<text x="911" y="102" fill="#f0f0f0" font-size="8.400" font-weight="bold">Data</text>
<path d="M990.500 96.500L993 99L990.500 101.500" fill="none" stroke="#eee" stroke-width="1.300"/>
<rect x="908.500" y="112" width="89" height="12" rx="2" fill="#1c1c1c" stroke="#7a7a7a" stroke-width=".8"/>
<circle cx="918.500" cy="117" r="2.500" fill="none" stroke="#bbb" stroke-width=".8"/><path d="M920 119L922 121.500" stroke="#bbb" stroke-width=".8"/>
<text x="926" y="120.500" fill="#aaa" font-size="6.800">Search</text>
<path d="M914.500 134L916.500 136L918.500 134" fill="none" stroke="#ccc" stroke-width=".9"/>
<circle cx="924.500" cy="135.500" r="3.300" fill="none" stroke="#ddd" stroke-width=".7"/><path d="M921.200 135.500H927.800M924.500 132.200V138.800" stroke="#ddd" stroke-width=".6"/>
<text x="930.500" y="138" class="d">EmpTable</text>

<g>
<use href="#ck" x="929" y="145"/><use href="#ck" x="929" y="157.500"/><use href="#ck" x="929" y="170"/><use href="#ck" x="929" y="182.500"/><use href="#ck" x="929" y="195"/><use href="#ck" x="929" y="207.500"/><use href="#ck" x="929" y="220"/><use href="#ck" x="929" y="232.500"/><use href="#ck" x="929" y="245"/><use href="#ck" x="929" y="257.500"/><use href="#ck" x="929" y="270"/><use href="#ck" x="929" y="282.500"/><use href="#ck" x="929" y="295"/><use href="#ck" x="940" y="307"/><use href="#ck" x="945" y="320"/><use href="#ck" x="945" y="332.500"/><use href="#ck" x="945" y="345"/><use href="#ck" x="945" y="357.500"/><use href="#ck" x="929" y="370"/><use href="#ck" x="929" y="382.500"/>
</g>
<g fill="#cfcfcf" font-size="8" text-anchor="middle">
<text x="943" y="151.500">Σ</text><text x="943" y="226.500">Σ</text><text x="943" y="251.500">Σ</text><text x="943" y="264">Σ</text><text x="943" y="276.500">Σ</text><text x="943" y="289">Σ</text><text x="943" y="376.500">Σ</text><text x="943" y="389">Σ</text>
</g>
<g>
<text x="949" y="151" class="d">Annual Salary</text><text x="949" y="163.500" class="d">Center</text><text x="949" y="176" class="d">Country</text><text x="949" y="188.500" class="d">Department</text><text x="949" y="201" class="d">First Name</text><text x="949" y="213.500" class="d">Gender</text><text x="949" y="226" class="d">Job Rate</text><text x="949" y="238.500" class="d">Last Name</text><text x="949" y="251" class="d">Monthly Salary</text><text x="949" y="263.500" class="d">No</text><text x="949" y="276" class="d">Overtime Hours</text><text x="949" y="288.500" class="d">Sick Leaves</text><text x="949" y="301" class="d">Start Date</text><text x="957" y="313.300" class="d">Date Hierarc...</text><text x="964.500" y="326" class="d">Year</text><text x="964.500" y="338.500" class="d">Quarter</text><text x="964.500" y="351" class="d">Month</text><text x="964.500" y="363.500" class="d">Day</text><text x="949" y="376" class="d">Unpaid Leaves</text><text x="949" y="388.500" class="d">Years</text>
</g>
<path d="M922 297L924 299L926 297M930 309L932 311L934 309" fill="none" stroke="#ccc" stroke-width=".9"/>
<rect x="940" y="295" width="7" height="7" fill="none" stroke="#aaa" stroke-width=".8"/><path d="M940 297.500H947" stroke="#aaa" stroke-width=".8"/>
<path d="M950 310.500L953 308M950 310.500L953 313" stroke="#ccc" fill="none" stroke-width=".8"/><circle cx="950" cy="310.500" r="1" fill="#ccc"/><circle cx="953.500" cy="308" r="1" fill="#ccc"/><circle cx="953.500" cy="313" r="1" fill="#ccc"/>

<!-- bottom -->
<rect x="21" y="506" width="791" height="18" fill="#2b2b2b"/>
<path d="M21 506H812" stroke="#444" stroke-width=".7"/>
<rect x="28.500" y="510" width="9" height="7" fill="none" stroke="#eee" stroke-width="1"/><path d="M30 519H36" stroke="#eee"/>
<rect x="26.500" y="521" width="13" height="1.200" fill="#2bc0a4"/>
<rect x="53" y="509.500" width="5.500" height="10" rx="1" fill="none" stroke="#eee" stroke-width="1"/><path d="M58.500 511V518" stroke="#e8643a" stroke-width=".8"/>
<path d="M73 512L70.500 515L73 518Z" fill="none" stroke="#bbb" stroke-width=".8"/><path d="M81.500 512L84 515L81.500 518Z" fill="none" stroke="#bbb" stroke-width=".8"/>
<rect x="88" y="506.500" width="40" height="16" fill="#1c1c1c"/>
<path d="M88 506.500V524" stroke="#555" stroke-width=".6"/>
<rect x="88" y="522" width="40" height="1.800" fill="#2bb79e"/>
<text x="98" y="518" fill="#fff" font-size="6.800" font-weight="bold">Page 1</text>
<rect x="128" y="506.500" width="20" height="17.500" fill="#2bab93"/>
<path d="M135 515H141M138 512V518" stroke="#0c0c0c" stroke-width="1.300"/>
<path d="M0 524.500H1000" stroke="#3f3f3f" stroke-width=".8"/>
<text x="2" y="534" fill="#d8e2ee" font-size="6.300">Page 1 of 1</text>
<path d="M790 531H792.500" stroke="#ccc"/><path d="M794 531H846" stroke="#888"/><rect x="820" y="528" width="2" height="6" fill="#ddd"/><path d="M849 531H852M850.500 529V533" stroke="#ccc" stroke-width=".8"/>
<text x="861" y="534" fill="#e8e8e8" font-size="6.300">110%</text>
<rect x="883" y="528" width="7" height="6" fill="none" stroke="#aaa" stroke-width="1"/>
<text x="898" y="534" fill="#d8e4f2" font-size="6.300">Update available (click to download)</text>
</svg>
</body></html>
